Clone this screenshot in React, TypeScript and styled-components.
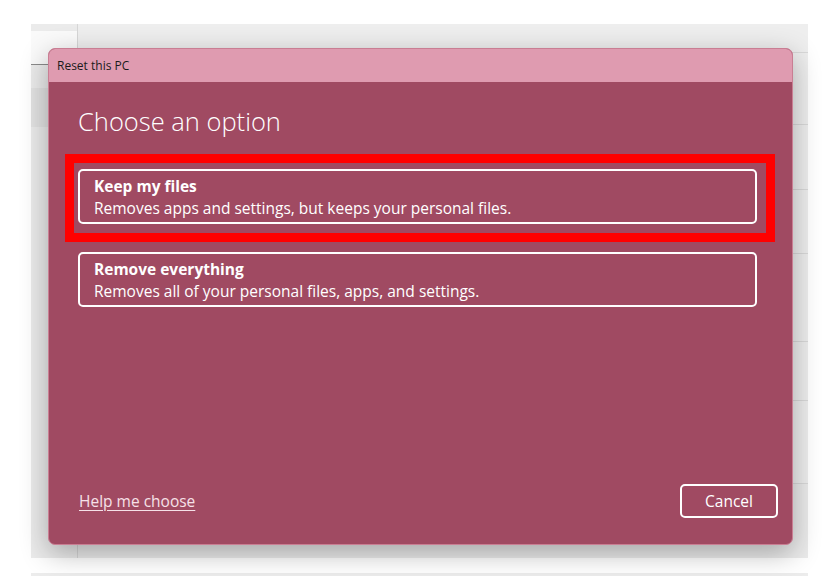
import styled, { createGlobalStyle } from "styled-components";

const GlobalStyle = createGlobalStyle`
  html, body {
    margin: 0;
    padding: 0;
    background: #fff;
  }
  body {
    font-family: "Open Sans", "Noto Sans", sans-serif;
  }
`;

const Page = styled.div`
  width: 834px;
  height: 576px;
  overflow: hidden;
  box-sizing: border-box;
  padding: 24px 26px 0 31px;
  display: flex;
  flex-direction: column;
`;

const Backdrop = styled.div`
  position: relative;
  height: 535px;
  background: #ebebeb;
  display: flex;
`;

const BottomStrip = styled.div`
  margin-top: 15px;
  height: 3px;
  background: #ececec;
`;

const NavColumn = styled.div`
  width: 46px;
  padding-top: 7px;
  display: flex;
  flex-direction: column;
  gap: 23px;
`;

const SearchBox = styled.div`
  width: 60px;
  height: 33px;
  background: #fafafa;
  border-radius: 0 4px 4px 0;
  border-bottom: 1px solid #8a8a8a;
`;

const NavItem = styled.div`
  width: 60px;
  height: 39px;
  background: #e2e2e2;
  border-radius: 0 4px 4px 0;
`;

const Content = styled.div`
  flex: 1;
  border-left: 1px solid #d6d6d6;
  display: flex;
  flex-direction: column;
`;

const Row = styled.div<{ $h: number }>`
  height: ${(p) => p.$h}px;
  border-bottom: 1px solid #d9d9d9;
  background: #eeeeee;
`;

const Dialog = styled.div`
  position: absolute;
  left: 17px;
  top: 24px;
  width: 745px;
  height: 497px;
  border-radius: 7px;
  overflow: hidden;
  background: #a04a62;
  border: 1px solid #c97e93;
  box-sizing: border-box;
  box-shadow: 0 8px 28px rgba(0, 0, 0, 0.3);
  display: flex;
  flex-direction: column;
`;

const TitleBar = styled.div`
  height: 33px;
  flex-shrink: 0;
  background: #df9bb0;
  color: #1b1b1b;
  font-size: 12px;
  display: flex;
  align-items: center;
  padding-left: 8px;
`;

const Body = styled.div`
  flex: 1;
  padding: 22px 35px 0 29px;
  display: flex;
  flex-direction: column;
`;

const Heading = styled.h1`
  margin: 0 0 31px;
  font-size: 25.5px;
  font-weight: 300;
  line-height: 34px;
  color: #ffffff;
`;

const Options = styled.div`
  display: flex;
  flex-direction: column;
  gap: 28px;
`;

const OptionCard = styled.button<{ $marked?: boolean }>`
  position: relative;
  height: 55px;
  box-sizing: border-box;
  border: 2px solid #ffffff;
  border-radius: 5px;
  background: transparent;
  padding: 3px 14px;
  text-align: left;
  font-family: inherit;
  color: #ffffff;
  display: flex;
  flex-direction: column;
  justify-content: center;
  ${(p) =>
    p.$marked &&
    `
    &::after {
      content: "";
      position: absolute;
      left: -15px;
      top: -17px;
      right: -20px;
      bottom: -20px;
      border: 9px solid #ff0000;
    }
  `}
`;

const OptionTitle = styled.span`
  font-size: 15.5px;
  font-weight: 700;
  line-height: 22px;
`;

const OptionText = styled.span`
  font-size: 15.5px;
  line-height: 22px;
`;

const Footer = styled.div`
  margin-top: auto;
  padding: 0 14px 26px 30px;
  display: flex;
  align-items: center;
  justify-content: space-between;
`;

const HelpLink = styled.a`
  color: #f6e1e8;
  font-size: 15.5px;
  text-decoration: underline;
  text-underline-offset: 3px;
  text-decoration-thickness: 1px;
`;

const CancelButton = styled.button`
  width: 98px;
  height: 34px;
  border: 2px solid #ffffff;
  border-radius: 5px;
  background: transparent;
  color: #ffffff;
  font-family: inherit;
  font-size: 15.5px;
`;

const rows = [28, 71, 64, 63, 87, 58, 82];

export default function App() {
  return (
    <>
      <GlobalStyle />
      <Page>
        <Backdrop>
          <NavColumn>
            <SearchBox />
            <NavItem />
          </NavColumn>
          <Content>
            {rows.map((h, i) => (
              <Row key={i} $h={h} />
            ))}
          </Content>
          <Dialog>
            <TitleBar>Reset this PC</TitleBar>
            <Body>
              <Heading>Choose an option</Heading>
              <Options>
                <OptionCard $marked>
                  <OptionTitle>Keep my files</OptionTitle>
                  <OptionText>Removes apps and settings, but keeps your personal files.</OptionText>
                </OptionCard>
                <OptionCard>
                  <OptionTitle>Remove everything</OptionTitle>
                  <OptionText>Removes all of your personal files, apps, and settings.</OptionText>
                </OptionCard>
              </Options>
            </Body>
            <Footer>
              <HelpLink href="#">Help me choose</HelpLink>
              <CancelButton>Cancel</CancelButton>
            </Footer>
          </Dialog>
        </Backdrop>
        <BottomStrip />
      </Page>
    </>
  );
}
